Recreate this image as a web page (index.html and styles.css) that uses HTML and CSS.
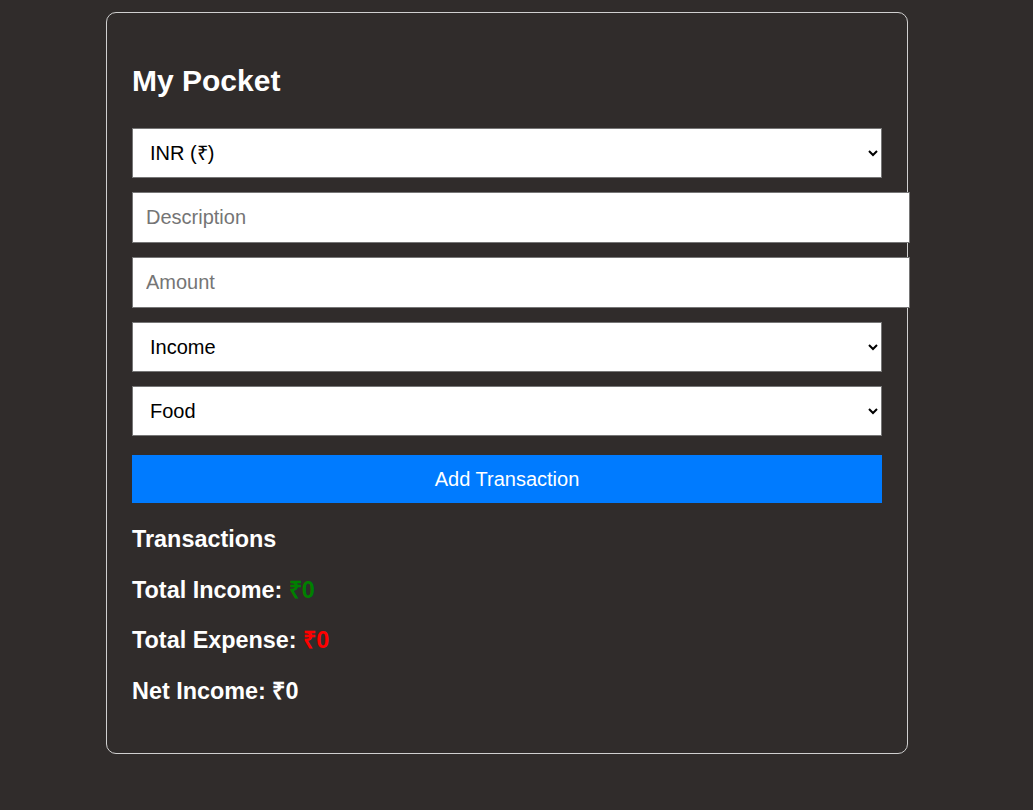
FILE: index.html
```html
<!DOCTYPE html>
<html lang="en">
<head>
  <meta charset="UTF-8">
  <meta name="viewport" content="width=device-width, initial-scale=1.0">
  <title>My Pocket</title>
  <link rel="stylesheet" href="styles.css">
</head>
<body>
  <div class="container">
    <h2>My Pocket</h2>

    <div class="form">
      <select id="currency">
        <option>INR (₹)</option>
        <option>USD ($)</option>
        <option>EUR (€)</option>
      </select>
      <input type="text" id="description" placeholder="Description">
      <input type="number" id="amount" placeholder="Amount">
      <select id="type">
        <option>Income</option>
        <option>Expense</option>
      </select>
      <select id="category">
        <option>Food</option>
        <option>Travel</option>
        <option>Shopping</option>
        <option>Other</option>
      </select>
      <button id="addBtn">Add Transaction</button>
    </div>

    <h3>Transactions</h3>
    <ul id="list"></ul>

    <h3>Total Income: <span class="income">₹0</span></h3>
    <h3>Total Expense: <span class="expense">₹0</span></h3>
    <h3>Net Income: <span>₹0</span></h3>
  </div>
</body>
</html>
```

FILE: styles.css
```css
body {
  margin: 0;
  padding-top: 12px;
  background-color: #302c2b;
  color: #fff;
  font-family: "Liberation Sans", Arial, sans-serif;
  font-size: 20px;
}

.container {
  width: 750px;
  margin-left: 106px;
  padding: 25px;
  border: 1px solid #d0d0d0;
  border-radius: 10px;
}

h2 {
  font-size: 30px;
  line-height: 35px;
  margin: 25px 0 30px;
}

.form {
  display: flex;
  flex-direction: column;
  align-items: flex-start;
  gap: 14px;
}

select,
input {
  box-sizing: border-box;
  font-family: inherit;
  font-size: 20px;
  color: #000;
  background-color: #fff;
  border: 1px solid #767676;
  border-radius: 0;
  margin: 0;
}

select {
  width: 750px;
  height: 50px;
  padding: 0 13px;
}

input {
  width: 778px;
  height: 51px;
  padding: 0 13px;
  outline: none;
}

input::placeholder {
  color: #757575;
}

button {
  width: 750px;
  height: 48px;
  margin-top: 5px;
  padding: 0;
  font-family: inherit;
  font-size: 20px;
  color: #fff;
  background-color: #007bff;
  border: none;
  cursor: pointer;
}

h3 {
  font-size: 23.4px;
  line-height: 27px;
  margin: 23.4px 0;
}

#list {
  margin: 0;
  padding: 0;
  list-style: none;
}

.income {
  color: green;
}

.expense {
  color: red;
}
```
